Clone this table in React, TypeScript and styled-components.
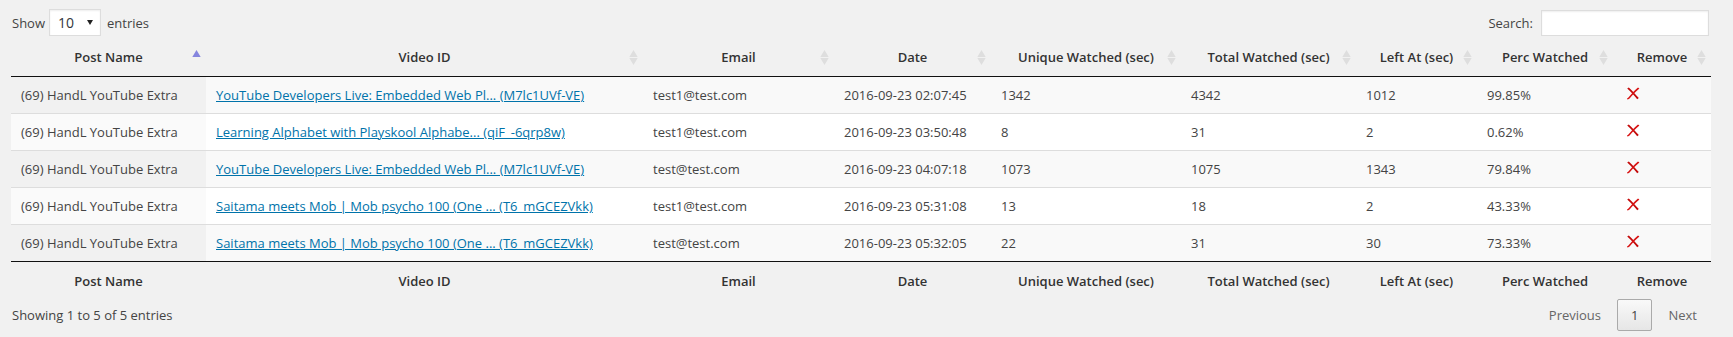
import React from "react";
import styled, { createGlobalStyle } from "styled-components";

const GlobalStyle = createGlobalStyle`
    body {
        margin: 0;
        background: #f1f1f1;
        font-family: "Open Sans", "Liberation Sans", sans-serif;
        font-size: 13px;
        color: #444;
    }
`;

interface ViewRow {
    post: string;
    video: string;
    email: string;
    date: string;
    unique: string;
    total: string;
    leftAt: string;
    perc: string;
}

const COLUMNS = [
    { title: "Post Name", width: 195 },
    { title: "Video ID", width: 437 },
    { title: "Email", width: 191 },
    { title: "Date", width: 157 },
    { title: "Unique Watched (sec)", width: 190 },
    { title: "Total Watched (sec)", width: 175 },
    { title: "Left At (sec)", width: 121 },
    { title: "Perc Watched", width: 136 },
    { title: "Remove", width: 98 },
];

const ROWS: ViewRow[] = [
    {
        post: "(69) HandL YouTube Extra",
        video: "YouTube Developers Live: Embedded Web Pl... (M7lc1UVf-VE)",
        email: "test1@test.com",
        date: "2016-09-23 02:07:45",
        unique: "1342",
        total: "4342",
        leftAt: "1012",
        perc: "99.85%",
    },
    {
        post: "(69) HandL YouTube Extra",
        video: "Learning Alphabet with Playskool Alphabe... (qiF_-6qrp8w)",
        email: "test1@test.com",
        date: "2016-09-23 03:50:48",
        unique: "8",
        total: "31",
        leftAt: "2",
        perc: "0.62%",
    },
    {
        post: "(69) HandL YouTube Extra",
        video: "YouTube Developers Live: Embedded Web Pl... (M7lc1UVf-VE)",
        email: "test@test.com",
        date: "2016-09-23 04:07:18",
        unique: "1073",
        total: "1075",
        leftAt: "1343",
        perc: "79.84%",
    },
    {
        post: "(69) HandL YouTube Extra",
        video: "Saitama meets Mob | Mob psycho 100 (One ... (T6_mGCEZVkk)",
        email: "test1@test.com",
        date: "2016-09-23 05:31:08",
        unique: "13",
        total: "18",
        leftAt: "2",
        perc: "43.33%",
    },
    {
        post: "(69) HandL YouTube Extra",
        video: "Saitama meets Mob | Mob psycho 100 (One ... (T6_mGCEZVkk)",
        email: "test@test.com",
        date: "2016-09-23 05:32:05",
        unique: "22",
        total: "31",
        leftAt: "30",
        perc: "73.33%",
    },
];

const Wrap = styled.div`
    width: 1700px;
    padding: 9px 22px 0 11px;
`;

const TopBar = styled.div`
    display: flex;
    justify-content: space-between;
    align-items: center;
    height: 27px;
    margin-bottom: 2px;
`;

const LengthLabel = styled.label`
    display: flex;
    align-items: center;
    gap: 4px;
    padding-left: 1px;
    color: #444;
`;

const SelectBox = styled.span`
    position: relative;
    display: inline-block;
    margin-right: 2px;
`;

const Select = styled.select`
    appearance: none;
    width: 52px;
    height: 27px;
    padding: 0 0 0 8px;
    border: 1px solid #ddd;
    border-radius: 0;
    background: #fff;
    box-shadow: inset 0 1px 2px rgba(0, 0, 0, 0.07);
    font-family: "Open Sans", "Liberation Sans", sans-serif;
    font-size: 14px;
    color: #32373c;
    outline: none;
`;

const SelectArrow = styled.span`
    position: absolute;
    right: 8px;
    top: 11px;
    width: 0;
    height: 0;
    border-left: 3.5px solid transparent;
    border-right: 3.5px solid transparent;
    border-top: 5px solid #222;
    pointer-events: none;
`;

const SearchLabel = styled.label`
    display: flex;
    align-items: center;
    gap: 8px;
    color: #444;
`;

const SearchInput = styled.input`
    width: 168px;
    height: 26px;
    box-sizing: border-box;
    border: 1px solid #ddd;
    background: #fff;
    box-shadow: inset 0 1px 2px rgba(0, 0, 0, 0.07);
    outline: none;
    margin-right: 2px;
`;

const Table = styled.table`
    width: 1700px;
    table-layout: fixed;
    border-collapse: separate;
    border-spacing: 0;
`;

const HeadCell = styled.th<{ $foot?: boolean }>`
    position: relative;
    padding: ${p => (p.$foot ? "10px 18px 6px" : "10px 18px")};
    line-height: 18px;
    font-weight: 600;
    color: #333;
    text-align: center;
    white-space: nowrap;
    border-bottom: ${p => (p.$foot ? "none" : "1px solid #111")};
    border-top: ${p => (p.$foot ? "1px solid #111" : "none")};
`;

const SortMark = styled.svg`
    position: absolute;
    right: 5px;
    top: 50%;
    margin-top: -7px;
`;

const Row = styled.tr<{ $odd: boolean }>`
    background: ${p => (p.$odd ? "#f9f9f9" : "#fff")};
`;

const Cell = styled.td<{ $sorted?: boolean; $odd?: boolean; $first?: boolean }>`
    padding: 8px 10px;
    line-height: 20px;
    color: #444;
    white-space: nowrap;
    overflow: hidden;
    border-top: ${p => (p.$first ? "none" : "1px solid #ddd")};
    background: ${p => (p.$sorted ? (p.$odd ? "#f1f1f1" : "#fafafa") : "transparent")};
`;

const VideoLink = styled.a`
    color: #0073aa;
    text-decoration: underline;
`;

const BottomBar = styled.div`
    display: flex;
    justify-content: space-between;
    align-items: flex-start;
`;

const Info = styled.div`
    padding-top: 10px;
    padding-left: 1px;
    line-height: 18px;
    color: #444;
`;

const Paging = styled.div`
    display: flex;
    padding-top: 3px;
`;

const PageButton = styled.span<{ $current?: boolean }>`
    display: inline-block;
    min-width: 1.5em;
    box-sizing: border-box;
    padding: 6px 13px;
    margin-left: 2px;
    line-height: 18px;
    text-align: center;
    border-radius: 2px;
    border: 1px solid ${p => (p.$current ? "#aaa" : "transparent")};
    background: ${p =>
        p.$current ? "linear-gradient(to bottom, #f9f9f9 0%, #e6e6e6 100%)" : "transparent"};
    color: ${p => (p.$current ? "#444" : "#666")};
`;

const RemoveMark = styled.svg`
    display: block;
    margin: -3px 0 0 3px;
`;

function SortIcon(props: { active?: boolean }) {
    if (props.active) {
        return (
            <SortMark width="9" height="15" viewBox="0 0 9 15">
                <polygon points="0.3,7 4.5,0 8.7,7" fill="#8585de" />
            </SortMark>
        );
    }
    return (
        <SortMark width="9" height="15" viewBox="0 0 9 15">
            <polygon points="0.3,7 4.5,0 8.7,7" fill="#dedede" />
            <polygon points="0.3,8 8.7,8 4.5,15" fill="#dedede" />
        </SortMark>
    );
}

function RemoveIcon() {
    return (
        <RemoveMark width="14" height="13" viewBox="0 0 14 13">
            <path d="M1.2 1.6 C4.8 4.8 8.4 8.6 11.2 12.2 L12.8 11 C9.8 7.4 6.2 3.6 2.8 0.4 Z" fill="#c40a0a" />
            <path d="M12 0.4 C8.6 3.4 5.2 7 2.4 10.4 C2 10.9 1.6 11.2 1 11.4 L1.4 12.6 C2.6 12.4 3.4 11.7 4 11 C6.8 7.8 10 4.4 13.4 1.6 Z" fill="#d81212" />
        </RemoveMark>
    );
}

export default function App() {
    return (
        <Wrap>
            <GlobalStyle />
            <TopBar>
                <LengthLabel>
                    Show
                    <SelectBox>
                        <Select defaultValue="10">
                            <option value="10">10</option>
                            <option value="25">25</option>
                            <option value="50">50</option>
                            <option value="100">100</option>
                        </Select>
                        <SelectArrow />
                    </SelectBox>
                    entries
                </LengthLabel>
                <SearchLabel>
                    Search:
                    <SearchInput type="search" />
                </SearchLabel>
            </TopBar>
            <Table>
                <colgroup>
                    {COLUMNS.map(c => (
                        <col key={c.title} style={{ width: c.width }} />
                    ))}
                </colgroup>
                <thead>
                    <tr>
                        {COLUMNS.map((c, i) => (
                            <HeadCell key={c.title}>
                                {c.title}
                                <SortIcon active={i === 0} />
                            </HeadCell>
                        ))}
                    </tr>
                </thead>
                <tbody>
                    {ROWS.map((r, i) => {
                        const odd = i % 2 === 0;
                        const first = i === 0;
                        return (
                            <Row key={i} $odd={odd}>
                                <Cell $sorted $odd={odd} $first={first}>
                                    {r.post}
                                </Cell>
                                <Cell $first={first}>
                                    <VideoLink href="#">{r.video}</VideoLink>
                                </Cell>
                                <Cell $first={first}>{r.email}</Cell>
                                <Cell $first={first}>{r.date}</Cell>
                                <Cell $first={first}>{r.unique}</Cell>
                                <Cell $first={first}>{r.total}</Cell>
                                <Cell $first={first}>{r.leftAt}</Cell>
                                <Cell $first={first}>{r.perc}</Cell>
                                <Cell $first={first}>
                                    <RemoveIcon />
                                </Cell>
                            </Row>
                        );
                    })}
                </tbody>
                <tfoot>
                    <tr>
                        {COLUMNS.map(c => (
                            <HeadCell key={c.title} $foot>
                                {c.title}
                            </HeadCell>
                        ))}
                    </tr>
                </tfoot>
            </Table>
            <BottomBar>
                <Info>Showing 1 to 5 of 5 entries</Info>
                <Paging>
                    <PageButton>Previous</PageButton>
                    <PageButton $current>1</PageButton>
                    <PageButton>Next</PageButton>
                </Paging>
            </BottomBar>
        </Wrap>
    );
}
